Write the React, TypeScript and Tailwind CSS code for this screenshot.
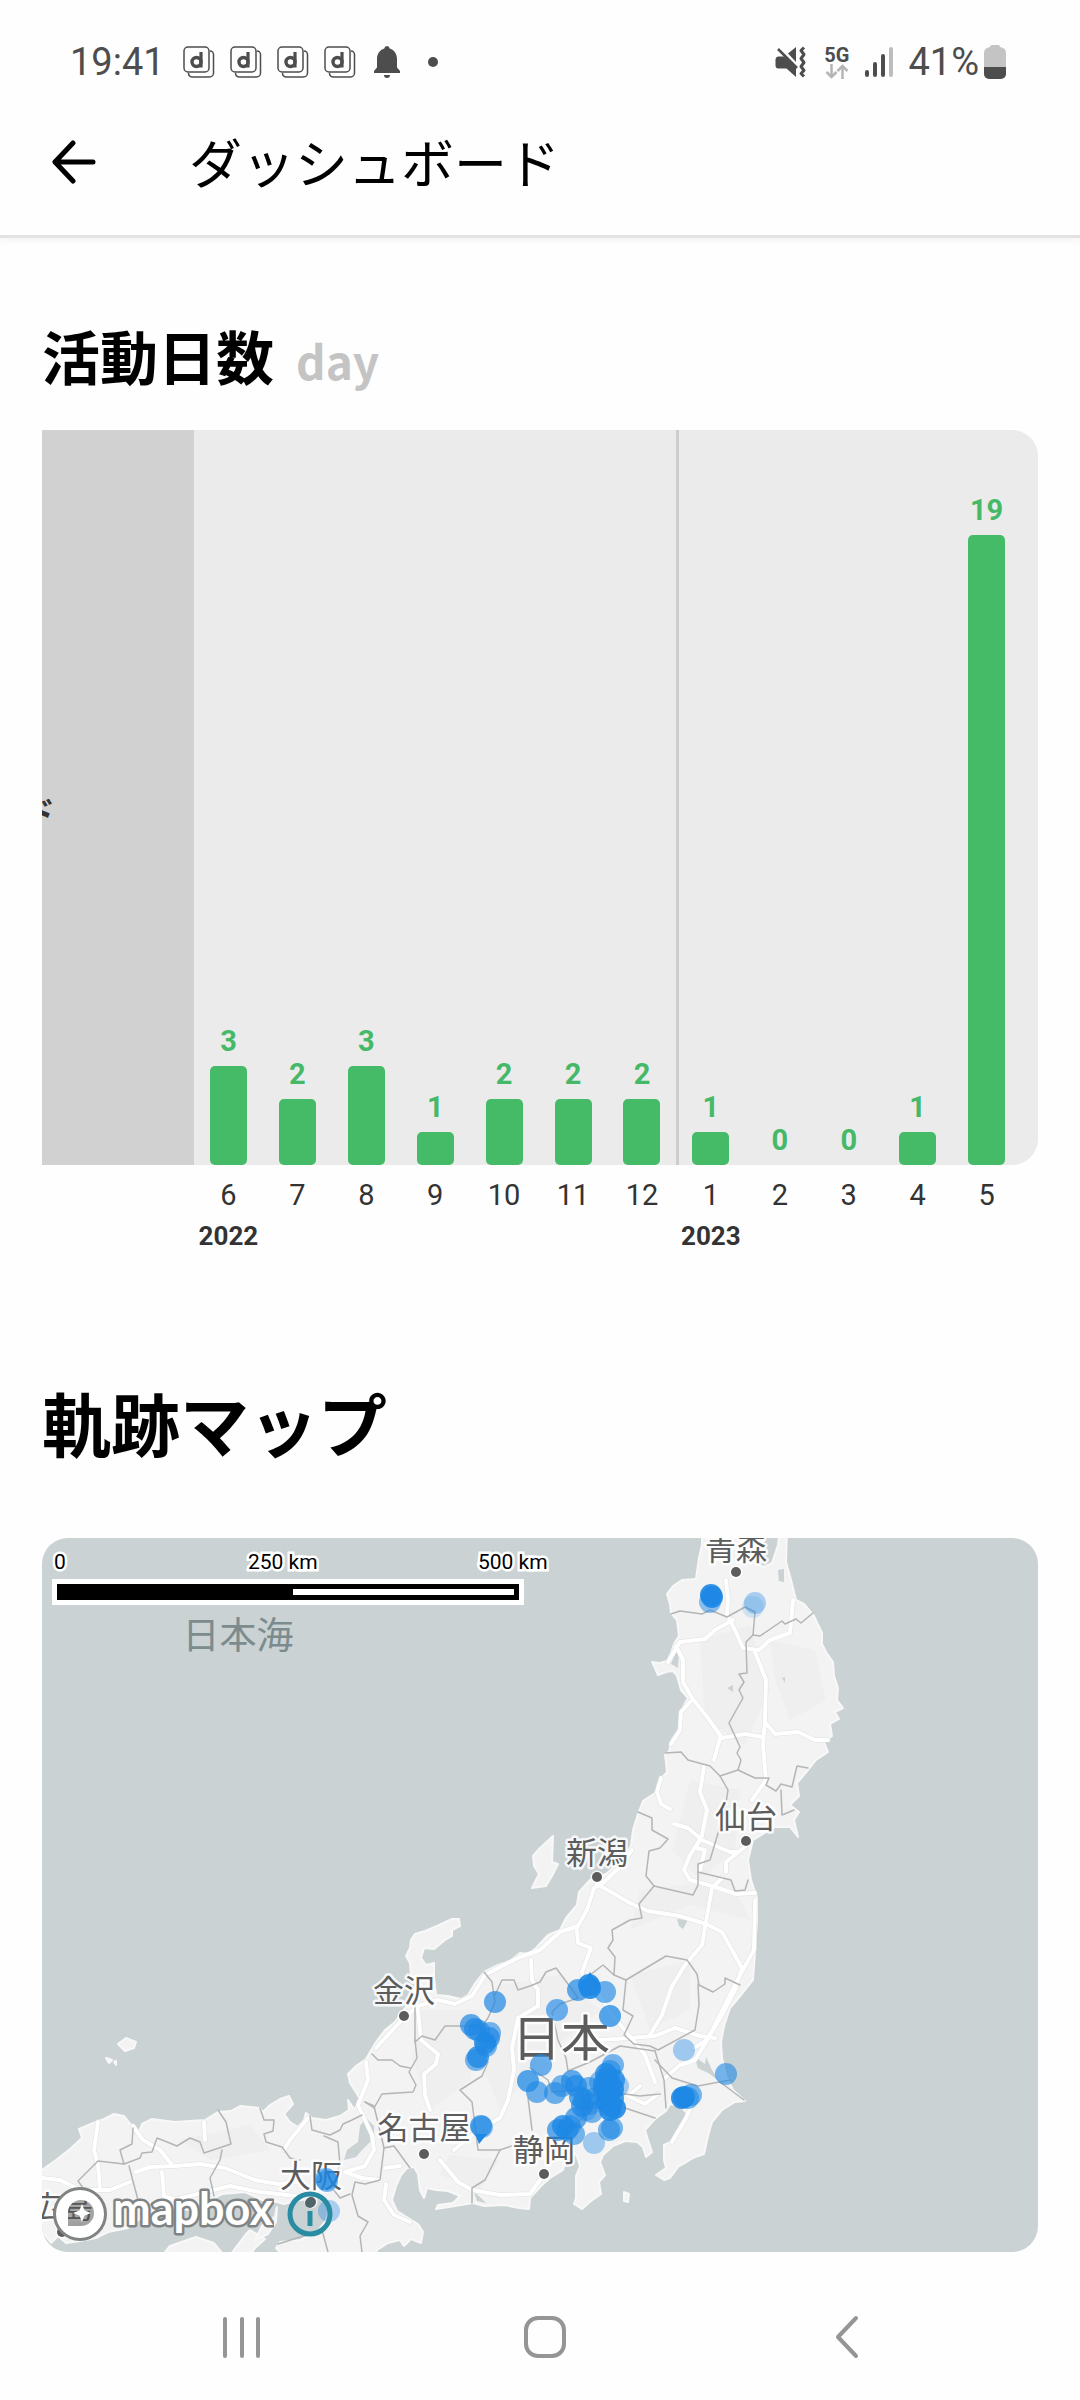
import type { ReactNode } from 'react';

interface MonthCount {
  month: number;
  days: number;
  year?: number;
}

const MONTHS: MonthCount[] = [
  { month: 6, days: 3, year: 2022 },
  { month: 7, days: 2 },
  { month: 8, days: 3 },
  { month: 9, days: 1 },
  { month: 10, days: 2 },
  { month: 11, days: 2 },
  { month: 12, days: 2 },
  { month: 1, days: 1, year: 2023 },
  { month: 2, days: 0 },
  { month: 3, days: 0 },
  { month: 4, days: 1 },
  { month: 5, days: 19 },
];

// ── Map data (map units, see the viewBox in TrackMap) ─────────────────────────
const HONSHU =
  'M702 1530 L702 1545 L699 1558 L696 1579 L682 1580 L673 1586 L667 1594 L670 1604 L671 1613 L677 1620 L679 1636 L674 1644 L671 1653 L667 1661 L660 1663 L652 1662 L655 1668 L658 1675 L666 1672 L673 1671 L677 1676 L681 1690 L688 1698 L681 1711 L680 1728 L672 1739 L669 1752 L665 1754 L667 1772 L660 1780 L655 1793 L643 1801 L638 1814 L633 1830 L631 1846 L622 1860 L606 1874 L590 1880 L579 1892 L577 1905 L566 1918 L560 1930 L548 1935 L536 1948 L528 1954 L520 1953 L510 1961 L498 1965 L484 1972 L476 1982 L468 1995 L461 1999 L448 1996 L436 1995 L434 1978 L434 1963 L426 1965 L421 1958 L424 1948 L434 1949 L445 1940 L452 1936 L452 1930 L460 1926 L459 1919 L452 1919 L437 1926 L425 1931 L415 1934 L411 1940 L410 1948 L406 1956 L410 1963 L411 1975 L416 1986 L408 2004 L395 2022 L385 2030 L376 2042 L366 2059 L356 2066 L348 2074 L350 2083 L357 2094 L361 2102 L354 2109 L348 2100 L349 2110 L340 2116 L326 2120 L312 2118 L306 2113 L304 2120 L298 2127 L290 2122 L284 2114 L293 2104 L289 2096 L280 2099 L270 2105 L263 2112 L260 2108 L240 2106 L231 2111 L218 2112 L205 2120 L175 2122 L152 2119 L142 2124 L139 2132 L132 2126 L124 2116 L114 2114 L104 2119 L96 2122 L79 2129 L82 2138 L70 2149 L56 2160 L42 2170 L30 2175 L30 2232 L44 2234 L51 2243 L58 2236 L66 2243 L80 2241 L96 2238 L108 2232 L128 2228 L141 2218 L158 2216 L170 2208 L190 2210 L210 2200 L222 2194 L245 2192 L262 2200 L277 2202 L284 2204 L300 2200 L318 2198 L330 2206 L326 2220 L317 2232 L300 2240 L280 2242 L276 2248 L287 2260 L374 2260 L377 2250 L388 2243 L400 2240 L404 2246 L411 2239 L421 2243 L423 2232 L418 2224 L405 2216 L397 2211 L392 2200 L396 2186 L401 2175 L407 2168 L414 2167 L418 2174 L420 2190 L424 2198 L427 2188 L436 2190 L448 2191 L460 2196 L453 2203 L438 2205 L436 2209 L455 2206 L473 2203 L484 2206 L505 2205 L519 2208 L529 2209 L530 2198 L541 2186 L550 2178 L563 2170 L566 2158 L576 2154 L580 2166 L576 2176 L576 2198 L574 2204 L582 2209 L591 2201 L601 2194 L599 2182 L605 2175 L600 2162 L603 2155 L613 2146 L625 2141 L637 2142 L643 2147 L646 2157 L652 2152 L648 2140 L645 2130 L655 2119 L666 2111 L670 2104 L680 2106 L688 2114 L684 2126 L675 2140 L664 2145 L664 2160 L666 2168 L656 2175 L664 2180 L670 2178 L678 2167 L695 2157 L704 2154 L708 2136 L712 2122 L722 2110 L735 2102 L745 2101 L733 2090 L726 2076 L722 2058 L721 2042 L724 2026 L730 2008 L741 1995 L753 1980 L755 1952 L757 1920 L757 1898 L751 1880 L748 1860 L753 1840 L766 1832 L775 1827 L790 1827 L798 1837 L794 1820 L799 1812 L790 1805 L799 1796 L797 1783 L808 1770 L816 1760 L828 1752 L824 1742 L832 1736 L830 1724 L839 1719 L835 1712 L843 1708 L837 1700 L838 1688 L834 1676 L833 1662 L826 1652 L822 1644 L822 1633 L814 1616 L804 1604 L796 1600 L791 1580 L786 1562 L787 1530 L780 1530 L778 1545 L772 1563 L764 1567 L757 1564 L764 1552 L762 1530 Z';

const ISLANDS = [
  'M553 1836 L552 1862 L558 1864 L552 1876 L546 1886 L532 1888 L539 1874 L534 1866 L533 1856 L540 1848 Z',
  'M160 2258 L170 2246 L196 2237 L214 2243 L226 2258 Z',
  'M228 2258 L246 2234 L250 2230 L265 2239 L255 2248 L248 2258 Z',
  'M255 2240 L262 2226 L273 2214 L277 2207 L276 2222 L268 2234 Z',
  'M624 2192 L629 2194 L628 2202 L624 2201 Z',
  'M118 2044 L126 2038 L136 2042 L134 2048 L125 2051 Z',
  'M106 2058 L112 2060 L109 2063 Z',
  'M114 2062 L116 2061 L116 2065 Z',
];

const WATERS = [
  'M344 2160 L347 2150 L358 2142 L360 2126 L366 2118 L374 2126 L374 2138 L362 2150 L356 2157 Z',
  'M254 2204 L276 2206 L274 2216 L262 2224 Z',
  'M284 2206 L302 2203 L300 2222 L290 2236 L278 2240 L280 2222 Z',
  'M677 1919 L688 1920 L683 1929 L679 1926 Z',
  'M694 2056 L705 2064 L706 2057 L712 2070 L720 2082 L710 2074 L698 2068 Z',
  'M778 1570 L784 1569 L784 1582 L779 1581 Z',
  'M676 1651 L679 1652 L678 1668 L671 1664 Z',
  'M474 2192 L481 2198 L486 2203 L477 2201 Z',
  'M727 1688 L733 1685 L733 1692 Z',
  'M782 1678 L785 1677 L785 1683 Z',
];

const HILLS = [
  'M700 1640 L750 1625 L770 1690 L745 1745 L705 1720 Z',
  'M770 1640 L815 1650 L826 1700 L790 1720 L775 1680 Z',
  'M690 1780 L740 1790 L735 1850 L700 1880 L672 1850 Z',
  'M640 1890 L730 1880 L750 1920 L690 1905 L630 1930 Z',
  'M500 1985 L560 1975 L600 2010 L540 2060 L500 2110 L480 2060 Z',
  'M420 2010 L480 2010 L470 2080 L430 2110 L412 2060 Z',
  'M630 1975 L690 1960 L690 2010 L650 2030 Z',
  'M180 2140 L250 2125 L270 2150 L210 2160 Z',
  'M450 2155 L500 2160 L480 2190 L440 2175 Z',
];

const ROADS = [
  'M726 1580 L728 1600 L727 1615 L735 1630 L743 1648 L759 1650 L770 1640 L790 1633 L793 1600',
  'M733 1620 L715 1630 L705 1639 L680 1642 L668 1662',
  'M676 1646 L683 1660 L683 1682 L692 1698 L708 1718 L722 1738 L745 1734 L763 1737',
  'M720 1738 L714 1760',
  'M704 1766 L700 1792 L707 1810 L702 1835 L696 1848 L705 1850 L700 1870',
  'M755 1652 L766 1680 L765 1720 L763 1745 L766 1780 L752 1800',
  'M765 1722 L775 1734 L798 1732 L815 1740 L828 1740',
  'M692 1700 L681 1712 L680 1730 L671 1744',
  'M661 1778 L657 1792 L661 1804 L670 1809',
  'M674 1824 L688 1828 L702 1840 L730 1852 L738 1852',
  'M702 1836 L690 1855 L684 1870 L690 1880 L712 1886 L736 1894 L755 1893',
  'M746 1846 L726 1862 L726 1872',
  'M722 1878 L712 1888 L707 1916 L702 1945 L685 1965 L672 1986 L662 2015 L650 2035',
  'M597 1884 L630 1903 L648 1911 L680 1916 L706 1924 L722 1932 L732 1950 L742 1968 L735 1990 L722 2015 L707 2040 L694 2048',
  'M632 1850 L622 1865 L604 1882 L594 1888 L587 1910 L578 1926 L560 1932 L540 1950 L520 1957 L498 1968 L485 1975 L472 1996 L455 2004 L438 2000 L418 2006 L400 2022 L376 2048',
  'M577 1930 L578 1943 L591 1948 L582 1972 L584 1985 L600 1996 L612 2015 L630 2036 L645 2055 L655 2082',
  'M531 1960 L532 1980 L538 1990 L538 2006 L518 2018 L512 2048 L514 2070 L508 2100 L500 2118 L478 2130 L454 2150',
  'M418 2010 L421 2040 L438 2054 L436 2064 L424 2074 L425 2095 L430 2110',
  'M600 2040 L630 2038 L655 2036 L675 2028 L700 2036 L715 2038',
  'M755 1900 L754 1950 L740 1975 L730 1995 L715 2025 L706 2042 L695 2060 L680 2065 L665 2078',
  'M440 2160 L458 2182 L472 2190 L500 2195 L530 2194 L540 2180',
  'M640 2086 L628 2096 L645 2104 L658 2094',
  'M696 2096 L686 2118 L672 2142',
  'M42 2178 L60 2180 L80 2190 L110 2190 L130 2182',
  'M136 2172 L150 2167 L175 2166 L200 2164 L225 2168 L255 2180 L278 2184 L300 2182',
  'M162 2172 L164 2196 L175 2200 L205 2192 L230 2186 L260 2192 L296 2196',
  'M133 2126 L143 2140 L160 2150 L172 2165',
  'M98 2122 L94 2150 L98 2165 L100 2190',
  'M204 2122 L205 2140',
  'M308 2118 L290 2140 L284 2150',
  'M366 2062 L368 2080 L358 2105 L372 2135 L374 2150 L365 2166 L345 2172 L362 2178 L380 2180',
  'M385 2168 L400 2166',
  'M386 2184 L384 2200 L394 2215 L410 2222',
];

const BORDERS = [
  'M671 1614 L680 1611 L702 1614 L710 1610 L727 1617 L745 1607 L755 1612 L753 1635 L760 1636 L782 1621 L785 1624 L796 1619 L801 1623 L813 1613',
  'M753 1635 L746 1642 L747 1673 L739 1674 L744 1682 L739 1690 L743 1698 L729 1723 L740 1747 L737 1753 L741 1760 L738 1770 L755 1778 L769 1778 L766 1785 L776 1791 L781 1784 L792 1787 L797 1766 L808 1768',
  'M665 1753 L681 1752 L688 1760 L710 1766 L720 1776 L728 1790 L725 1810 L716 1840 L710 1860 L698 1864 L698 1885 L693 1895 L654 1886 L646 1876 L649 1851 L660 1848 L668 1839 L652 1830 L652 1818 L638 1812',
  'M720 1776 L738 1770',
  'M781 1790 L782 1815 L794 1810',
  'M698 1872 L731 1880 L735 1891 L745 1890 L748 1880',
  'M654 1886 L639 1904 L642 1918 L630 1920 L612 1930 L613 1940 L608 1948 L615 1957 L614 1975 L603 1965 L590 1975',
  'M614 1975 L626 1980 L666 1956 L687 1960 L697 1974 L699 1985 L713 1992 L725 1984 L725 1978 L740 1985',
  'M626 1980 L623 2010 L633 2016 L624 2035 L634 2044 L650 2046 L658 2050 L695 2030 L699 2005 L698 1984',
  'M484 1972 L492 1982 L495 2002 L488 2018 L482 2026 L445 2026 L435 2040 L422 2036 L415 2042 L415 1999',
  'M495 1995 L502 1980 L514 1980 L518 1990 L530 1986 L540 1982 L546 1972 L556 1968 L568 1984 L578 1998 L560 2004 L552 2012 L558 2040 L566 2058 L568 2071 L590 2062 L620 2046 L655 2051',
  'M488 2062 L482 2076 L460 2090 L472 2102 L475 2125 L478 2150 L500 2150 L534 2138',
  'M500 2150 L485 2180 L472 2188 L472 2203',
  'M415 2040 L417 2058 L409 2072 L416 2085 L413 2092 L382 2094 L374 2108 L365 2102',
  'M530 2068 L548 2080 L552 2092 L575 2090 L590 2110 L575 2125 L560 2130',
  'M528 2098 L532 2130',
  'M372 2054 L378 2060 L392 2060 L400 2066 L410 2068',
  'M655 2051 L664 2080 L666 2108',
  'M655 2060 L672 2078 L698 2086 L730 2080',
  'M720 2082 L744 2100',
  'M610 2092 L640 2096 L660 2094',
  'M625 2108 L655 2118',
  'M365 2102 L374 2106 L384 2148 L380 2180 L365 2184 L355 2182 L352 2195 L358 2216 L368 2222 L360 2236 L362 2252',
  'M384 2148 L394 2146 L410 2168',
  'M310 2116 L312 2130 L330 2135 L340 2130 L343 2124 L352 2120 L362 2115',
  'M260 2108 L264 2120 L274 2120 L273 2131 L264 2134 L266 2142 L282 2147 L290 2158 L300 2160',
  'M324 2136 L338 2142 L340 2165 L330 2185 L340 2198 L350 2194',
  'M218 2110 L226 2122 L231 2144 L204 2153 L200 2142 L190 2138 L177 2146 L157 2138 L152 2152 L142 2153 L140 2158 L124 2164 L120 2150 L132 2144 L133 2128',
  'M222 2150 L220 2160 L210 2178 L214 2196',
  'M124 2164 L98 2161 L78 2181 L86 2192',
  'M129 2166 L138 2200',
  'M278 2244 L310 2234 L322 2230 L328 2252',
];

interface City {
  name: string;
  x: number;
  y: number;
  dot: [number, number];
}

const CITIES: City[] = [
  { name: '青森', x: 736, y: 1560, dot: [736, 1572] },
  { name: '仙台', x: 746, y: 1828, dot: [746, 1841] },
  { name: '新潟', x: 597, y: 1864, dot: [597, 1877] },
  { name: '金沢', x: 404, y: 2002, dot: [404, 2016] },
  { name: '名古屋', x: 424, y: 2139, dot: [424, 2154] },
  { name: '静岡', x: 544, y: 2161, dot: [544, 2174] },
  { name: '大阪', x: 311, y: 2187, dot: [311, 2202] },
  { name: '広島', x: 62, y: 2218, dot: [62, 2232] },
];

// [x, y, opacity]
const TRACKS: [number, number, number][] = [
  [711, 1595, 0.9], [712, 1597, 0.9], [710, 1602, 0.5], [755, 1603, 0.35], [753, 1607, 0.15],
  [495, 2002, 0.7], [471, 2025, 0.7], [475, 2029, 0.7], [479, 2031, 0.6], [490, 2033, 0.6],
  [489, 2038, 0.7], [485, 2043, 0.8], [486, 2046, 0.6], [478, 2057, 0.8], [476, 2060, 0.6],
  [578, 1990, 0.7], [589, 1985, 0.9], [590, 1988, 0.9], [605, 1992, 0.65], [557, 2010, 0.65],
  [610, 2016, 0.75], [541, 2065, 0.65], [528, 2081, 0.75], [537, 2092, 0.65], [555, 2093, 0.65],
  [562, 2086, 0.6], [572, 2081, 0.7], [576, 2086, 0.7], [580, 2097, 0.7], [582, 2106, 0.7],
  [589, 2088, 0.6], [586, 2110, 0.4], [592, 2112, 0.6], [576, 2118, 0.7], [563, 2126, 0.8],
  [558, 2130, 0.7], [567, 2130, 0.7], [574, 2134, 0.6], [594, 2143, 0.4], [612, 2128, 0.6],
  [609, 2130, 0.6], [613, 2065, 0.6], [610, 2071, 0.6], [607, 2078, 0.8], [610, 2084, 0.8],
  [614, 2080, 0.8], [604, 2090, 0.8], [608, 2095, 0.9], [606, 2101, 0.9], [611, 2106, 0.9],
  [615, 2108, 0.9], [610, 2110, 0.9], [613, 2098, 0.8], [618, 2086, 0.4], [600, 2082, 0.5],
  [596, 2098, 0.5], [606, 2074, 0.8], [613, 2089, 0.9], [604, 2084, 0.8], [570, 2126, 0.6],
  [584, 2100, 0.6], [590, 2104, 0.5], [684, 2050, 0.4], [726, 2074, 0.6], [682, 2098, 0.9],
  [684, 2097, 0.9], [691, 2095, 0.6], [688, 2098, 0.6], [481, 2126, 0.7], [482, 2127, 0.5],
  [326, 2179, 0.6], [327, 2181, 0.6], [329, 2211, 0.35],
];

// ── Status bar ────────────────────────────────────────────────────────────────
function StackedAppIcon() {
  return (
    <svg viewBox="0 0 32 32" className="h-8 w-8" fill="none" stroke="#4d4d4d" aria-hidden="true">
      <rect x="1" y="1" width="25" height="25" rx="4" strokeWidth="1.5" />
      <path d="M27 5a3.5 3.5 0 0 1 3.500 3.500V27a4 4 0 0 1-4 4H9a4 4 0 0 1-3.500-4" strokeWidth="1.5" />
      <circle cx="13.500" cy="16" r="4.500" strokeWidth="3.400" />
      <path d="M18 6v15.500" strokeWidth="3.200" />
    </svg>
  );
}

function StatusBar() {
  return (
    <div className="flex h-[88px] items-center justify-between pr-[74px] pl-[70px] pt-9 text-[#4d4d4d]">
      <div className="flex items-center">
        <span className="mr-[18px] text-[38px] leading-none">19:41</span>
        <div className="flex gap-[15px]">
          <StackedAppIcon />
          <StackedAppIcon />
          <StackedAppIcon />
          <StackedAppIcon />
        </div>
        <svg viewBox="0 0 26 32" className="ml-[18px] h-8 w-[26px]" fill="#4d4d4d" aria-hidden="true">
          <path d="M13 0a2.800 2.800 0 0 1 2.700 2.500C20.500 4 23 8 23 13v8.500l3 3.500v2H0v-2l3-3.500V13C3 8 5.500 4 10.300 2.500A2.800 2.800 0 0 1 13 0Z" />
          <path d="M10 29h6a3 3 0 0 1-6 0Z" />
        </svg>
        <span className="ml-7 h-[10px] w-[10px] rounded-full bg-[#4d4d4d]" />
      </div>
      <div className="flex items-center">
        <svg viewBox="0 0 31 32" className="mr-[18px] h-8 w-[31px]" aria-hidden="true">
          <path d="M3 10.500h6L21 22v9l-9.500-8.500H3.500A3 3 0 0 1 .5 19.500v-6a3 3 0 0 1 2.500-3Z" fill="#4d4d4d" />
          <path d="M13 7.500 21 1v15Z" fill="#4d4d4d" />
          <path d="M3 3 22 22" stroke="#4d4d4d" strokeWidth="2.500" />
          <path d="M29 1.500 26 4.500l3 4-3 4 3 4-3 4 3 4-3 3 3 3" fill="none" stroke="#4d4d4d" strokeWidth="3" strokeLinejoin="round" />
        </svg>
        <div className="mr-4 flex flex-col items-center">
          <span className="text-[20px] leading-[18px] font-bold">5G</span>
          <svg viewBox="0 0 24 15" className="h-[15px] w-6" fill="none" stroke="#b5b5b5" strokeWidth="2.500" aria-hidden="true">
            <path d="M6.500 0v13M1.500 8l5 5 5-5M17.500 15V2M12.500 7l5-5 5 5" />
          </svg>
        </div>
        <svg viewBox="0 0 28 30" className="mr-[15px] h-[30px] w-7" strokeWidth="4" strokeLinecap="round" aria-hidden="true">
          <path d="M2 25v3M10 17v11M18 9v19" stroke="#4d4d4d" />
          <path d="M26 2v26" stroke="#bdbdbd" />
        </svg>
        <span className="text-[38px] leading-none">41%</span>
        <svg viewBox="0 0 22 34" className="ml-[5px] h-[34px] w-[22px]" aria-hidden="true">
          <path d="M6 2q0-2 2-2h6q2 0 2 2 6 1 6 6v14H0V8q0-5 6-6Z" fill="#c4c4c4" />
          <path d="M0 22h22v7a5 5 0 0 1-5 5H5a5 5 0 0 1-5-5Z" fill="#4d4d4d" />
        </svg>
      </div>
    </div>
  );
}

function Header() {
  return (
    <header className="flex h-[150px] items-center border-b-[3px] border-[#e3e3e3] pl-[52px] shadow-[0_3px_6px_#f4f4f4]">
      <button type="button" aria-label="戻る">
        <svg viewBox="0 0 44 44" className="h-11 w-11" fill="none" stroke="#000" strokeWidth="5" strokeLinecap="round" strokeLinejoin="round" aria-hidden="true">
          <path d="M41 22H3M21 3 3 22l18 19" />
        </svg>
      </button>
      <h1 className="ml-[93px] pt-2 text-[53px] leading-[60px] text-black">ダッシュボード</h1>
    </header>
  );
}

// ── Activity chart ────────────────────────────────────────────────────────────
const PX_PER_DAY = 33.15;

function ActivityChart() {
  return (
    <figure>
      <div className="flex h-[735px] overflow-hidden rounded-r-[26px] bg-[#ebebeb] pr-[17px]">
        <div className="flex w-[152px] shrink-0 items-center overflow-hidden bg-[#d1d1d1] pt-8">
          <span className="-ml-5 text-[33px] font-bold text-[#333]">ド</span>
        </div>
        <div className="grid flex-1 grid-cols-12">
          {MONTHS.map(({ month, days, year }) => (
            <div
              key={month}
              className={`flex flex-col items-center justify-end ${year === 2023 ? 'border-l-[3px] border-[#cdcdcd] pr-[3px]' : ''}`}
            >
              <span className="mb-[11px] text-[29px] leading-7 font-bold text-[#46b968]">{days}</span>
              <div className="w-[37px] rounded-[5px] bg-[#45bb67]" style={{ height: Math.round(days * PX_PER_DAY) }} />
            </div>
          ))}
        </div>
      </div>
      <figcaption className="grid grid-cols-12 pt-4 pr-[17px] pl-[152px] text-center text-[#333]">
        {MONTHS.map(({ month, year }) => (
          <div key={month} className="flex flex-col items-center">
            <span className="text-[29px] leading-7">{month}</span>
            {year && <span className="mt-[13px] text-[26px] leading-7 font-bold">{year}</span>}
          </div>
        ))}
      </figcaption>
    </figure>
  );
}

// ── Track map ─────────────────────────────────────────────────────────────────
function ScaleLabel({ className, children }: { className: string; children: ReactNode }) {
  return (
    <span className={`absolute top-0 text-[21px] leading-6 whitespace-nowrap text-black [-webkit-text-stroke:5px_white] [paint-order:stroke_fill] ${className}`}>
      {children}
    </span>
  );
}

function ScaleBar() {
  return (
    <div className="absolute top-3 left-[10px] w-[472px]">
      <div className="relative h-[29px]">
        <ScaleLabel className="left-[2px]">0</ScaleLabel>
        <ScaleLabel className="left-[196px]">250 km</ScaleLabel>
        <ScaleLabel className="left-[426px]">500 km</ScaleLabel>
      </div>
      <div className="bg-white p-[5px]">
        <div className="flex h-4 justify-end bg-black py-[5px] pr-[5px]">
          <div className="w-[221px] bg-white" />
        </div>
      </div>
    </div>
  );
}

function MapboxLogo() {
  return (
    <svg viewBox="0 0 222 56" className="h-14 w-[222px]" aria-label="mapbox" role="img">
      <circle cx="28" cy="28" r="25" fill="none" stroke="#808384" strokeWidth="4" />
      <path
        d="M28 4a24 24 0 1 0 0 48 24 24 0 0 0 0-48ZM16 40V27a13 13 0 1 1 13 13Z"
        fill="#fff"
        fillRule="evenodd"
      />
      <path d="M16 40V27a13 13 0 1 1 13 13Z" fill="#4d4d4d" fillOpacity="0.5" />
      <path d="m30 18 2.600 6.400L39 27l-6.400 2.600L30 36l-2.600-6.400L21 27l6.400-2.600Z" fill="#fff" />
      <text
        x="61"
        y="39"
        className="font-['Lato',sans-serif] text-[45px] font-bold [paint-order:stroke]"
        fill="#fff"
        stroke="#808384"
        strokeWidth="5"
        strokeLinejoin="round"
      >
        mapbox
      </text>
    </svg>
  );
}

function TrackMap() {
  return (
    <div className="relative overflow-hidden rounded-[26px] bg-[#cad2d3]">
      <svg viewBox="42 1538 996 714" className="block w-full" role="img" aria-label="軌跡マップ">
        <g stroke="#f8f8f8" strokeWidth="2" strokeLinejoin="round" fill="#f3f3f3">
          <path d={HONSHU} />
          {ISLANDS.map((d) => <path key={d} d={d} />)}
        </g>
        <g fill="#e9e9e9" fillOpacity="0.3">
          {HILLS.map((d) => <path key={d} d={d} />)}
        </g>
        <g fill="#cad2d3">
          {WATERS.map((d) => <path key={d} d={d} />)}
        </g>
        <g fill="none" strokeLinejoin="round" strokeLinecap="round">
          <g stroke="#e0e0e0" strokeWidth="5">
            {ROADS.map((d) => <path key={d} d={d} />)}
          </g>
          <g stroke="#fff" strokeWidth="4">
            {ROADS.map((d) => <path key={d} d={d} />)}
          </g>
          <g stroke="#b4b5b5" strokeWidth="1.5">
            {BORDERS.map((d) => <path key={d} d={d} />)}
          </g>
        </g>
        <g
          className="font-['Noto_Sans_CJK_JP',sans-serif] text-[31px] [paint-order:stroke]"
          fill="#5c5c5c"
          stroke="#fff"
          strokeOpacity="0.85"
          strokeWidth="5"
          strokeLinejoin="round"
          textAnchor="middle"
        >
          {CITIES.map(({ name, x, y, dot }) => (
            <g key={name}>
              <text x={x} y={y}>{name}</text>
              <circle cx={dot[0]} cy={dot[1]} r="5" strokeWidth="3" />
            </g>
          ))}
          <text x="561" y="2056" className="text-[49px]">日本</text>
        </g>
        <g fill="#1e88e5">
          {TRACKS.map(([x, y, opacity], i) => (
            <circle key={i} cx={x} cy={y} r="11" fillOpacity={opacity} />
          ))}
          <path d="M590 1972l6 10h-12ZM475 2134h12l-8 10Z" />
        </g>
        <text x="238" y="1649" textAnchor="middle" fill="#7c8b8d" className="font-['Noto_Sans_CJK_JP',sans-serif] text-[37px]">
          日本海
        </text>
      </svg>
      <ScaleBar />
      <div className="absolute bottom-[10px] left-[10px] flex items-center gap-[13px]">
        <MapboxLogo />
        <button type="button" aria-label="地図情報">
          <svg viewBox="0 0 46 46" className="h-[46px] w-[46px]" fill="none" stroke="#2a8ca3" aria-hidden="true">
            <circle cx="23" cy="23" r="20" strokeWidth="5" />
            <path d="M23 20v15" strokeWidth="5" />
            <circle cx="23" cy="12" r="5" fill="#4f6468" stroke="none" />
          </svg>
        </button>
      </div>
    </div>
  );
}

function NavigationBar() {
  return (
    <nav className="flex justify-between pt-[62px] pr-[211px] pl-[220px]">
      <button type="button" aria-label="履歴">
        <svg viewBox="0 0 44 46" className="h-[46px] w-11" stroke="#959595" strokeWidth="4" strokeLinecap="round" aria-hidden="true">
          <path d="M5 5v37M22 5v37M38 5v37" />
        </svg>
      </button>
      <button type="button" aria-label="ホーム">
        <svg viewBox="0 0 44 46" className="h-[46px] w-11" fill="none" stroke="#959595" strokeWidth="4" aria-hidden="true">
          <rect x="3" y="4" width="38" height="38" rx="12" />
        </svg>
      </button>
      <button type="button" aria-label="戻る">
        <svg viewBox="0 0 44 46" className="h-[46px] w-11" fill="none" stroke="#959595" strokeWidth="4" strokeLinecap="round" strokeLinejoin="round" aria-hidden="true">
          <path d="M31 4 13 23l18 19" />
        </svg>
      </button>
    </nav>
  );
}

export default function App() {
  return (
    <div className="min-h-screen bg-[#fefefe] pb-5 font-['Roboto','Noto_Sans_CJK_JP',sans-serif]">
      <StatusBar />
      <Header />
      <main className="px-[42px]">
        <section className="pt-[81px]">
          <h2 className="mb-[34px] flex items-baseline font-['Noto_Sans_CJK_JP',sans-serif] text-[58px] leading-[72px] font-bold text-black">
            活動日数
            <span className="ml-[22px] text-[46px] text-[#c4c4c4]">day</span>
          </h2>
          <ActivityChart />
        </section>
        <section className="pt-[129px]">
          <h2 className="mb-[59px] text-[69px] leading-[100px] font-bold text-black">軌跡マップ</h2>
          <TrackMap />
        </section>
      </main>
      <NavigationBar />
    </div>
  );
}
